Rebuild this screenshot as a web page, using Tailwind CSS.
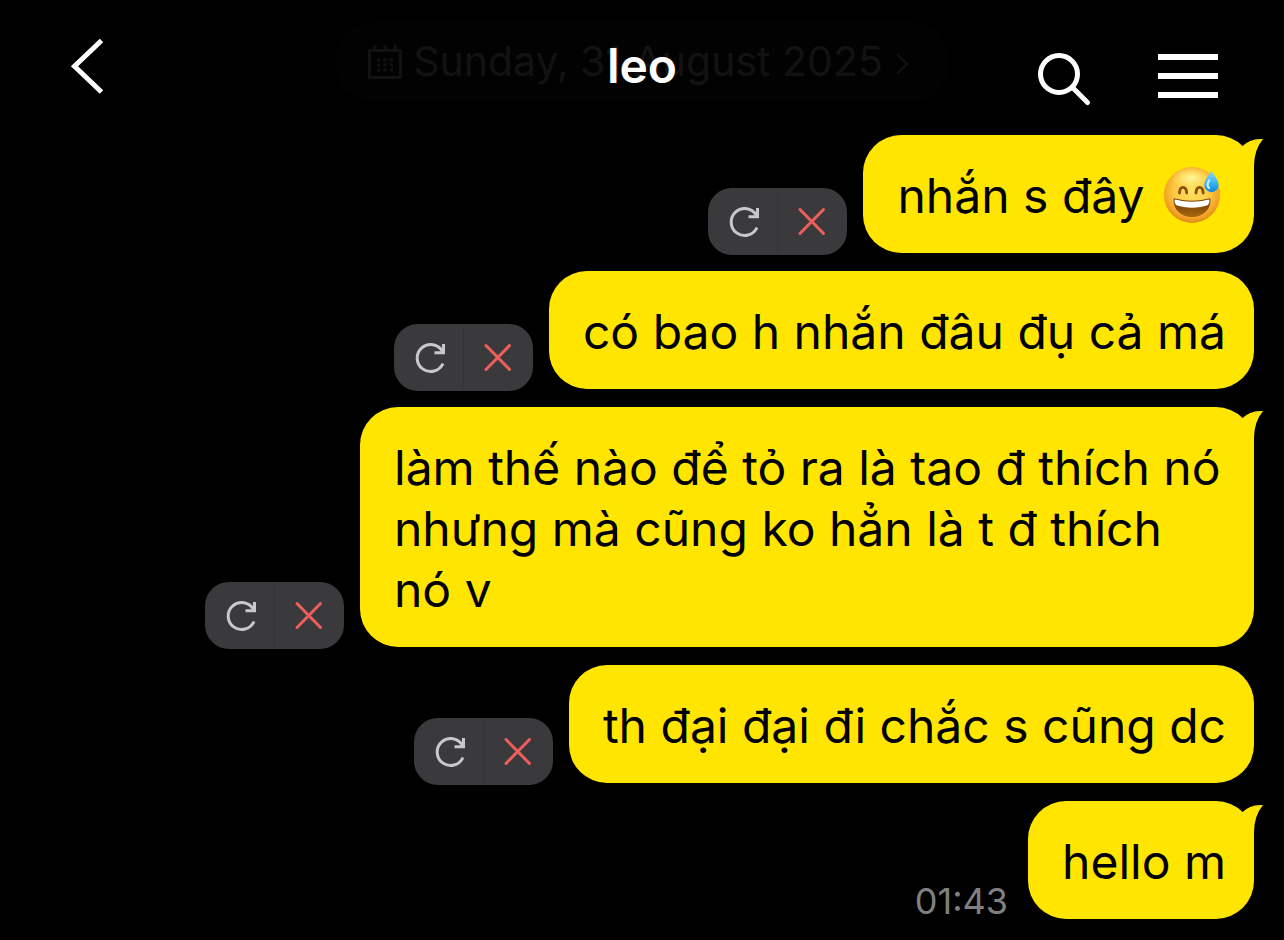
<!DOCTYPE html>
<html lang="vi">
<head>
    <meta charset="UTF-8">
    <meta name="viewport" content="width=device-width, initial-scale=1.0">
    <title>leo</title>
    <script src="https://cdn.jsdelivr.net/npm/@tailwindcss/browser@4"></script>
</head>
<body class="bg-black font-['Inter','Noto_Sans',sans-serif] min-h-screen overflow-x-hidden">
    <header class="grid grid-cols-[1fr_auto_1fr] items-center px-[66px] pt-[22px]">
        <button type="button" aria-label="Back" class="justify-self-start">
            <svg class="w-10 h-20" viewBox="0 0 40 80" fill="none" stroke="#fff" stroke-width="5">
                <path d="M35.500 18.500 8.500 44.200 35.500 70"/>
            </svg>
        </button>

        <!-- date chip fades out behind the title -->
        <div class="grid items-center justify-items-center">
            <button type="button" class="col-start-1 row-start-1 flex items-center gap-2.5 h-20 rounded-full bg-[#020202] text-[#121212] text-[41px] whitespace-nowrap pl-8 pr-10">
                <svg class="w-9 h-9" viewBox="0 0 36 36" fill="none" stroke="currentColor" stroke-width="3">
                    <path d="M2.500 6.500h31v27h-31zM8 1v5M18 1v5M28 1v5"/>
                    <path d="M10 16h16M10 21h16M10 26h16" stroke-dasharray="3 3.500"/>
                </svg>
                <span>Sunday, 31 August 2025</span>
                <svg class="w-4 h-6" viewBox="0 0 16 24" fill="none" stroke="currentColor" stroke-width="2">
                    <path d="M4 4l10 10L4 24"/>
                </svg>
            </button>
            <h1 class="col-start-1 row-start-1 z-10 pt-2 text-white text-5xl leading-[60px] font-semibold">leo</h1>
        </div>

        <div class="justify-self-end flex gap-16">
            <button type="button" aria-label="Search">
                <svg class="w-14 h-20 overflow-visible" viewBox="0 0 56 80" fill="none" stroke="#fff" stroke-width="5" stroke-linecap="round">
                    <circle cx="21" cy="52" r="18.500"/>
                    <path d="M34.500 65.500 49.500 80.500"/>
                </svg>
            </button>
            <button type="button" aria-label="Menu">
                <svg class="w-[60px] h-20" viewBox="0 0 60 80" fill="#fff">
                    <path d="M0 32h60v6H0zM0 51h60v6H0zM0 70h60v6H0z"/>
                </svg>
            </button>
        </div>
    </header>

    <main id="chat" class="flex flex-col gap-[18px] px-[30px] pt-[33px] pb-[21px]"></main>

    <script>
        const emoji = `
            <svg role="img" aria-label="😅" class="inline-block align-middle w-[60px] h-[60px] mx-1 -mt-4 -mb-1" viewBox="0 0 60 60">
                <defs>
                    <radialGradient id="face" cx="50%" cy="42%" r="60%">
                        <stop offset="0" stop-color="#ffe264"/>
                        <stop offset=".55" stop-color="#fdc840"/>
                        <stop offset=".82" stop-color="#f3a227"/>
                        <stop offset="1" stop-color="#dd8314"/>
                    </radialGradient>
                    <radialGradient id="shine" cx="50%" cy="45%" r="50%">
                        <stop offset="0" stop-color="#fff8a0"/>
                        <stop offset="1" stop-color="#ffe96a" stop-opacity="0"/>
                    </radialGradient>
                    <linearGradient id="mouth" x1="0" y1="0" x2="0" y2="1">
                        <stop offset="0" stop-color="#6b3404"/>
                        <stop offset="1" stop-color="#a8660f"/>
                    </linearGradient>
                    <linearGradient id="drop" x1="0" y1="0" x2="0" y2="1">
                        <stop offset="0" stop-color="#8fd8f5"/>
                        <stop offset=".6" stop-color="#36b2ee"/>
                        <stop offset="1" stop-color="#0f86dc"/>
                    </linearGradient>
                </defs>
                <circle cx="30" cy="31" r="28" fill="url(#face)"/>
                <ellipse cx="29" cy="15" rx="20" ry="11" fill="url(#shine)"/>
                <path d="M17.500 29c.3-7.500 6.700-7.500 7.200 0M34 29c.3-7.500 6.700-7.500 7.200 0" fill="none" stroke="#8a5008" stroke-width="2.800" stroke-linecap="round"/>
                <path d="M11.500 36c0-1.500 1-1.800 2-1.500 11 3 22 3 33 0 1-.3 2 0 2 1.500 0 10-8 17-18.500 17s-18.500-7-18.500-17z" fill="url(#mouth)"/>
                <path d="M12.500 36.500c0-1 .6-1.200 1.300-1 11 3 21.400 3 32.400 0 .7-.2 1.300 0 1.300 1-.1 2.500-.7 4-2 4.800-9 3.200-22 3.200-31 0-1.300-.8-1.900-2.300-2-4.800z" fill="#fff"/>
                <path d="M49.500 6.500c2 4.500 7.200 9.500 7.200 14.500a7.200 7.200 0 0 1-14.400 0c0-5 5.200-10 7.200-14.500z" fill="url(#drop)"/>
                <path d="M47 16.500c-2 3.500-1.800 6 0 7.500" fill="none" stroke="#c9efff" stroke-width="2.200" stroke-linecap="round"/>
            </svg>`;

        const messages = [
            { text: `nhắn s đây ${emoji}`, tail: true, failed: true },
            { text: 'có bao h nhắn đâu đụ cả má', failed: true },
            { text: 'làm thế nào để tỏ ra là tao đ thích nó nhưng mà cũng ko hẳn là t đ thích nó v', tail: true, failed: true },
            { text: 'th đại đại đi chắc s cũng dc', failed: true },
            { text: 'hello m', tail: true, time: '01:43' }
        ];

        const actions = `
            <div class="flex shrink-0 -mb-0.5 mr-4 rounded-3xl overflow-hidden bg-[#3a3a3c]">
                <button type="button" aria-label="Resend" class="border-r border-[#353537]">
                    <svg class="w-[69px] h-[67px]" viewBox="0 0 69 67" fill="none" stroke="#c8c8ca" stroke-width="3">
                        <path d="M49 39.500A13.500 13.500 0 1 1 48.500 27.500"/>
                        <path d="M49.500 20v8.700H40.500"/>
                    </svg>
                </button>
                <button type="button" aria-label="Delete">
                    <svg class="w-[69px] h-[67px]" viewBox="0 0 69 67" fill="none" stroke="#ee5f5b" stroke-width="3" stroke-linecap="round">
                        <path d="M22 21.500 45.500 45.500M45.500 21.500 22 45.500"/>
                    </svg>
                </button>
            </div>`;

        const tail = `
            <svg class="absolute top-0 -right-[10px] w-10 h-12" viewBox="0 0 40 48" fill="#ffe500">
                <path d="M12 20 18 11.500Q26 3 39 4 30 15 30 31V46z"/>
            </svg>`;

        function renderMessage(msg) {
            const row = document.createElement('div');
            row.className = 'flex items-end justify-end';
            row.innerHTML = `
                ${msg.failed ? actions : ''}
                ${msg.time ? `<time class="mr-5 text-[36px] leading-9 text-[#808080]">${msg.time}</time>` : ''}
                <div class="relative max-w-[894px] rounded-[38px] bg-[#ffe500] pl-[34px] pr-7 pt-[30px] pb-[27px]">
                    <p class="text-black text-5xl leading-[61px]">${msg.text}</p>
                    ${msg.tail ? tail : ''}
                </div>
            `;
            return row;
        }

        const chat = document.getElementById('chat');
        messages.forEach(msg => chat.appendChild(renderMessage(msg)));
    </script>
</body>
</html>
